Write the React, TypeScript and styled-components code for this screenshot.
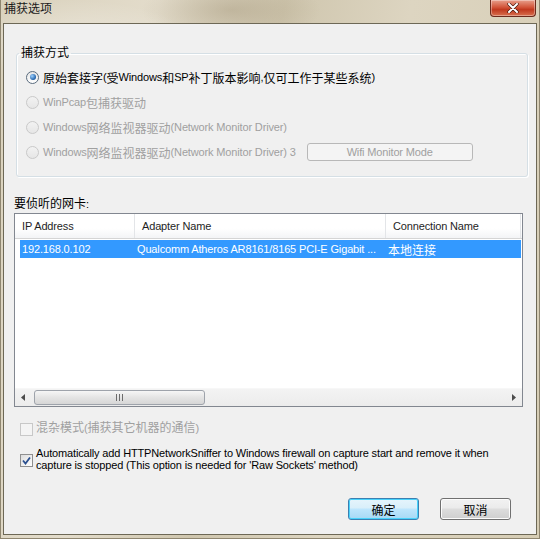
import { ReactElement } from 'react'
import styled, { createGlobalStyle } from 'styled-components'

const GlobalStyle = createGlobalStyle`
  html, body {
    margin: 0;
    padding: 0;
    width: 540px;
    height: 539px;
    overflow: hidden;
  }
  body {
    font-family: "Liberation Sans", "Noto Sans CJK SC", sans-serif;
    font-size: 11px;
    letter-spacing: -0.15px;
    color: #000;
  }
`

// CJK runs are drawn a point larger than the Latin text, as in the original dialog
const Cjk = styled.span`
  font-size: 12px;
  letter-spacing: 0;
`

const CJK_RUN = /([\u3000-\u9fff\uff00-\uffef]+)/

const Txt = ({ children }: { children: string }): ReactElement => (
  <>
    {children.split(CJK_RUN).map((part, i) =>
      CJK_RUN.test(part) ? <Cjk key={i}>{part}</Cjk> : part
    )}
  </>
)

const Window = styled.div`
  width: 540px;
  height: 539px;
  display: flex;
  flex-direction: column;
  box-sizing: border-box;
  background:
    radial-gradient(ellipse 120px 40px at 70px 40px, rgba(255,255,255,0.35), transparent),
    radial-gradient(ellipse 90px 30px at 230px 10px, rgba(150,135,105,0.35), transparent),
    linear-gradient(100deg, #d9d1bc 0%, #e3dccb 25%, #cfc6ae 45%, #ddd5c1 65%, #d6cdb5 100%);
  border-left: 1px solid #8f8670;
  border-right: 1px solid #8f8670;
  border-bottom: 1px solid #8f8670;
`

const TitleBar = styled.div`
  height: 23px;
  display: flex;
  align-items: flex-start;
  justify-content: space-between;
  padding-left: 3px;
`

const Title = styled.span`
  line-height: 12px;
  margin-top: 3px;
  color: #1a1a1a;
`

const CloseButton = styled.div`
  width: 44px;
  height: 16px;
  margin-right: 3px;
  border: 1px solid #6b2a1c;
  border-top: none;
  border-radius: 0 0 4px 4px;
  background: linear-gradient(#e8a08c, #d2553a 45%, #c0391f 60%, #d8704f);
  display: flex;
  align-items: center;
  justify-content: center;
  box-shadow: inset 0 0 0 1px rgba(255,255,255,0.35);
`

const Client = styled.div`
  flex: 1;
  margin: 0 2px 3px 2px;
  border: 1px solid #6d6856;
  background: #f0f0f0;
  display: flex;
  flex-direction: column;
  padding: 23px 10px 0 10px;
  box-sizing: border-box;
`

const Group = styled.fieldset`
  margin: 0 0 0 2px;
  width: 512px;
  height: 130px;
  box-sizing: border-box;
  border: 1px solid #d5dfe5;
  border-radius: 3px;
  box-shadow: inset 1px 1px 0 #fff, 1px 1px 0 #fff;
  padding: 10px 0 0 9px;
  display: flex;
  flex-direction: column;
  gap: 9px;
`

const Legend = styled.legend`
  padding: 0 2px;
  margin-left: -7px;
  line-height: 12px;
`

const OptionRow = styled.div<{ $disabled?: boolean }>`
  display: flex;
  align-items: center;
  height: 16px;
  white-space: nowrap;
  color: ${({ $disabled }) => ($disabled ? '#a0a0a0' : '#000')};
`

const Radio = styled.span<{ $checked?: boolean; $disabled?: boolean }>`
  width: 11px;
  height: 11px;
  border-radius: 50%;
  border: 1px solid ${({ $disabled }) => ($disabled ? '#c9c9c9' : '#5a6c7e')};
  background: ${({ $disabled }) => ($disabled ? 'linear-gradient(#f2f2f2, #e6e6e6)' : 'linear-gradient(#e6e6e6, #ffffff)')};
  margin-right: 4px;
  display: flex;
  align-items: center;
  justify-content: center;
  flex-shrink: 0;
  &::after {
    content: '';
    display: ${({ $checked }) => ($checked ? 'block' : 'none')};
    width: 6px;
    height: 6px;
    border-radius: 50%;
    background: radial-gradient(circle at 35% 35%, #9fd2ff, #1e5fa8 70%, #173f73);
  }
`

const WifiButton = styled.div`
  margin-left: 11px;
  width: 164px;
  height: 16px;
  border: 1px solid #b8b8b8;
  border-radius: 3px;
  background: #f4f4f4;
  color: #a0a0a0;
  display: flex;
  align-items: center;
  justify-content: center;
`

const SectionLabel = styled.div`
  margin: 20px 0 0 0;
  line-height: 14px;
  height: 14px;
`

const ListBox = styled.div`
  margin-top: 2px;
  width: 509px;
  height: 194px;
  box-sizing: border-box;
  border: 1px solid #828790;
  background: #fff;
  display: flex;
  flex-direction: column;
`

const HeaderRow = styled.div`
  display: grid;
  grid-template-columns: 120px 251px 135px;
  height: 24px;
  border-bottom: 1px solid #d5d5d5;
  background: linear-gradient(#fff 0%, #fff 60%, #f3f4f6 100%);
`

const HeaderCell = styled.div`
  padding-left: 7px;
  display: flex;
  align-items: center;
  border-right: 1px solid #e3e5e8;
  white-space: nowrap;
  overflow: hidden;
  color: #1e1e1e;
`

const DataRow = styled.div<{ $selected?: boolean }>`
  margin: 1px 1px 0 5px;
  display: grid;
  grid-template-columns: 115px 251px 135px;
  height: 18px;
  background: ${({ $selected }) => ($selected ? '#3399ff' : 'transparent')};
  color: ${({ $selected }) => ($selected ? '#fff' : '#000')};
`

const DataCell = styled.div`
  padding-left: 2px;
  display: flex;
  align-items: center;
  white-space: nowrap;
  overflow: hidden;
`

const ListFill = styled.div`
  flex: 1;
`

const HScroll = styled.div`
  height: 17px;
  display: flex;
  align-items: center;
  background: linear-gradient(#f3f3f3, #ececec);
  border-top: 1px solid #f7f7f7;
`

const ScrollArrow = styled.div`
  width: 16px;
  height: 17px;
  display: flex;
  align-items: center;
  justify-content: center;
`

const Thumb = styled.div`
  width: 171px;
  height: 15px;
  margin-left: 3px;
  box-sizing: border-box;
  border: 1px solid #9ea3ab;
  border-radius: 3px;
  background: linear-gradient(#f6f6f6, #e4e4e4 50%, #d6d6d6);
  display: flex;
  align-items: center;
  justify-content: center;
`

const ScrollTrack = styled.div`
  flex: 1;
`

const CheckRow = styled.div<{ $disabled?: boolean; $top: number }>`
  display: flex;
  align-items: flex-start;
  margin: ${({ $top }) => $top}px 0 0 6px;
  color: ${({ $disabled }) => ($disabled ? '#a0a0a0' : '#000')};
`

const CheckBox = styled.span<{ $disabled?: boolean; $offset?: number }>`
  width: 11px;
  height: 11px;
  border: 1px solid ${({ $disabled }) => ($disabled ? '#c8c8c8' : '#8f8f8f')};
  background: ${({ $disabled }) => ($disabled ? '#f4f4f4' : 'linear-gradient(135deg, #dcdcdc, #ffffff)')};
  margin: ${({ $offset = 1 }) => $offset}px 3px 0 0;
  display: flex;
  align-items: center;
  justify-content: center;
  flex-shrink: 0;
`

const CheckText = styled.div`
  line-height: 12px;
  white-space: nowrap;
`

const ButtonRow = styled.div`
  display: flex;
  justify-content: flex-end;
  gap: 21px;
  margin: 27px 15px 0 0;
`

const Button = styled.div<{ $default?: boolean }>`
  width: 71px;
  height: 22px;
  box-sizing: border-box;
  border: 1px solid ${({ $default }) => ($default ? '#3c7fb1' : '#707070')};
  border-radius: 3px;
  background: ${({ $default }) =>
    $default
      ? 'linear-gradient(#e5f4fc 0%, #d9effa 45%, #bee6fd 50%, #a7d9f5 100%)'
      : 'linear-gradient(#f2f2f2 0%, #ebebeb 45%, #dddddd 50%, #cfcfcf 100%)'};
  box-shadow: inset 0 0 0 1px ${({ $default }) => ($default ? '#48d2fb' : '#fcfcfc')};
  display: flex;
  align-items: center;
  justify-content: center;
`

const CloseGlyph = (): ReactElement => (
  <svg width='12' height='10' viewBox='0 0 12 10'>
    <path d='M2 1 L10 9 M10 1 L2 9' stroke='#3a1208' strokeWidth='3.2' strokeLinecap='round' />
    <path d='M2 1 L10 9 M10 1 L2 9' stroke='#fff' strokeWidth='2' strokeLinecap='round' />
  </svg>
)

const Tick = (): ReactElement => (
  <svg width='9' height='9' viewBox='0 0 9 9'>
    <path d='M1 4.5 L3.5 7.5 L8 1.5' stroke='#2a4f8f' strokeWidth='1.8' fill='none' />
  </svg>
)

const options = [
  { label: '原始套接字(受Windows和SP补丁版本影响,仅可工作于某些系统)', checked: true, disabled: false },
  { label: 'WinPcap包捕获驱动', checked: false, disabled: true },
  { label: 'Windows网络监视器驱动(Network Monitor Driver)', checked: false, disabled: true },
  { label: 'Windows网络监视器驱动(Network Monitor Driver) 3', checked: false, disabled: true, wifi: true }
]

export default function App (): ReactElement {
  return (
    <Window>
      <GlobalStyle />
      <TitleBar>
        <Title><Txt>捕获选项</Txt></Title>
        <CloseButton><CloseGlyph /></CloseButton>
      </TitleBar>
      <Client>
        <Group>
          <Legend><Txt>捕获方式</Txt></Legend>
          {options.map((o) => (
            <OptionRow key={o.label} $disabled={o.disabled}>
              <Radio $checked={o.checked} $disabled={o.disabled} />
              <Txt>{o.label}</Txt>
              {o.wifi && <WifiButton>Wifi Monitor Mode</WifiButton>}
            </OptionRow>
          ))}
        </Group>

        <SectionLabel><Txt>要侦听的网卡:</Txt></SectionLabel>
        <ListBox>
          <HeaderRow>
            <HeaderCell>IP Address</HeaderCell>
            <HeaderCell>Adapter Name</HeaderCell>
            <HeaderCell>Connection Name</HeaderCell>
          </HeaderRow>
          <DataRow $selected>
            <DataCell>192.168.0.102</DataCell>
            <DataCell>Qualcomm Atheros AR8161/8165 PCI-E Gigabit ...</DataCell>
            <DataCell><Txt>本地连接</Txt></DataCell>
          </DataRow>
          <ListFill />
          <HScroll>
            <ScrollArrow>
              <svg width='4' height='7' viewBox='0 0 4 7'><path d='M4 0 L0 3.5 L4 7 Z' fill='#4d4d4d' /></svg>
            </ScrollArrow>
            <Thumb>
              <svg width='7' height='7' viewBox='0 0 7 7'>
                <path d='M0.5 0 V7 M3.5 0 V7 M6.5 0 V7' stroke='#6c6c6c' strokeWidth='1' />
              </svg>
            </Thumb>
            <ScrollTrack />
            <ScrollArrow>
              <svg width='4' height='7' viewBox='0 0 4 7'><path d='M0 0 L4 3.5 L0 7 Z' fill='#4d4d4d' /></svg>
            </ScrollArrow>
          </HScroll>
        </ListBox>

        <CheckRow $disabled $top={15}>
          <CheckBox $disabled />
          <CheckText><Txt>混杂模式(捕获其它机器的通信)</Txt></CheckText>
        </CheckRow>
        <CheckRow $top={11}>
          <CheckBox $offset={7}><Tick /></CheckBox>
          <CheckText>
            Automatically add HTTPNetworkSniffer to Windows firewall on capture start and remove it when<br />
            capture is stopped (This option is needed for 'Raw Sockets' method)
          </CheckText>
        </CheckRow>

        <ButtonRow>
          <Button $default><Txt>确定</Txt></Button>
          <Button><Txt>取消</Txt></Button>
        </ButtonRow>
      </Client>
    </Window>
  )
}
